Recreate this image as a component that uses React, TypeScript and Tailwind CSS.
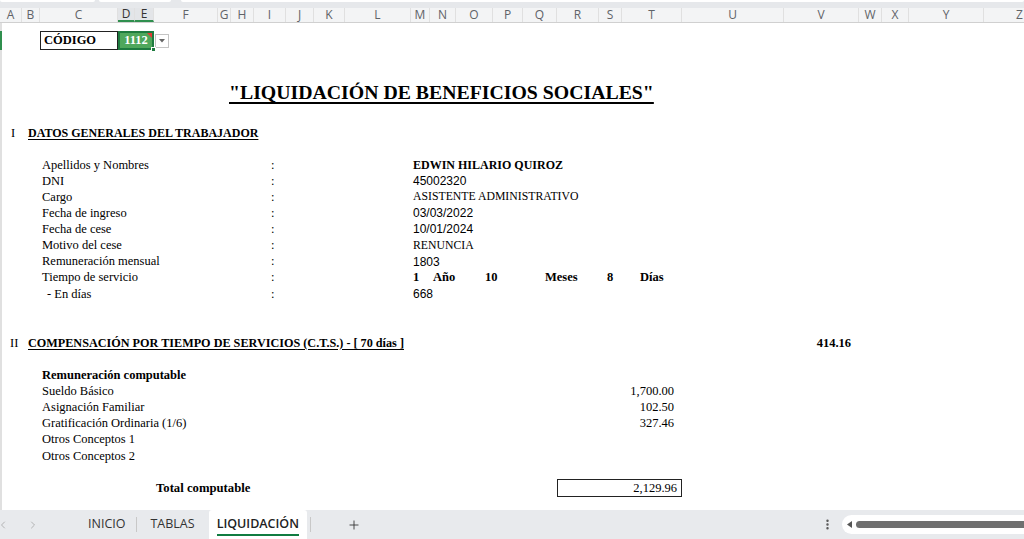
import React from "react";
import { ChevronLeft, ChevronRight, Plus, EllipsisVertical } from "lucide-react";

const cols: [string, string][] = [
  ["A", "w-[22px]"], ["B", "w-[18px]"], ["C", "w-[78px]"], ["D", "w-[17px]"], ["E", "w-[19px]"],
  ["F", "w-[64px]"], ["G", "w-[13px]"], ["H", "w-[23px]"], ["I", "w-[32px]"], ["J", "w-[28px]"],
  ["K", "w-[31px]"], ["L", "w-[66px]"], ["M", "w-[19px]"], ["N", "w-[26px]"], ["O", "w-[37px]"],
  ["P", "w-[30px]"], ["Q", "w-[34px]"], ["R", "w-[42px]"], ["S", "w-[23px]"], ["T", "w-[60px]"],
  ["U", "w-[102px]"], ["V", "w-[75px]"], ["W", "w-[23px]"], ["X", "w-[27px]"], ["Y", "w-[75px]"],
  ["Z", "w-[72px]"],
];

const serif = "font-['Liberation_Serif',serif]";
const sans = "font-['Liberation_Sans',sans-serif]";

function InfoRow({ label, value, indent }: { label: string; value: React.ReactNode; indent?: boolean }) {
  return (
    <div className="flex h-[16.1px] shrink-0 items-center">
      <div className="w-[40px] shrink-0" />
      <div className={`w-[229px] shrink-0 ${indent ? "pl-[5px]" : ""}`}>{label}</div>
      <div className="w-[142px] shrink-0">:</div>
      <div className="flex items-center whitespace-nowrap">{value}</div>
    </div>
  );
}

function CtsRow({ label, value, bold }: { label: string; value?: string; bold?: boolean }) {
  return (
    <div className="flex h-[16.2px] shrink-0 items-center">
      <div className="w-[40px] shrink-0" />
      <div className={`w-[532px] shrink-0 ${bold ? "font-bold" : ""}`}>{label}</div>
      <div className="w-[100px] shrink-0 text-right">{value ?? ""}</div>
    </div>
  );
}

export default function App() {
  return (
    <div className="flex h-[539px] w-[1024px] flex-col overflow-hidden bg-white">
      {/* top band */}
      <div className="flex h-[8px] shrink-0 items-start gap-[4px] bg-[#e6e8eb]">
        <div className="h-[2px] w-[95px] rounded-b-[3px] bg-white" />
        <div className="h-[2px] w-[72px] rounded-b-[3px] bg-white" />
        <div className="ml-[6px] h-[2px] flex-1 rounded-b-[3px] bg-white" />
      </div>
      {/* column headers */}
      <div className="flex h-[15px] shrink-0 border-b border-[#d0d0d0] bg-[#f3f4f5] font-['Open_Sans',sans-serif] text-[12px] leading-none text-[#5f6368]">
        {cols.map(([l, w]) => {
          const sel = l === "D" || l === "E";
          return (
            <div
              key={l}
              className={`${w} flex shrink-0 items-center justify-center border-r border-[#e0e0e0] ${sel ? "border-b-2 border-b-[#2f8f4e] bg-[#e3e5e8] text-[#333]" : ""}`}
            >
              {l}
            </div>
          );
        })}
      </div>
      {/* sheet */}
      <div className={`relative flex flex-1 flex-col border-l-[2px] border-[#e0e0e0] text-[12.5px] leading-none text-black ${serif}`}>
        <div className="absolute left-[-2px] top-[8px] h-[19px] w-[2px] bg-[#2f8f4e]" />
        <div className="h-[8px] shrink-0" />
        {/* código */}
        <div className="flex h-[19px] shrink-0 items-stretch">
          <div className="w-[38px] shrink-0" />
          <div className="flex w-[78px] shrink-0 items-center border border-[#222] pl-[3px] font-bold">CÓDIGO</div>
          <div className="relative flex w-[36px] shrink-0 items-center justify-center border-2 border-[#1e7b3f] bg-[#4fa75c] font-bold text-white">
            1112
            <div className="absolute right-0 top-0 h-0 w-0 border-l-[5px] border-t-[5px] border-l-transparent border-t-[#e53935]" />
            <div className="absolute bottom-[-4px] right-[-4px] h-[5px] w-[5px] border border-white bg-[#1e7b3f]" />
          </div>
          <div className="ml-[1px] mt-[3px] flex h-[14px] w-[14px] shrink-0 items-center justify-center border border-[#c4c4c4] bg-white">
            <svg width="6" height="4" viewBox="0 0 6 4"><path d="M0 0 L6 0 L3 3.5 Z" fill="#666" /></svg>
          </div>
        </div>
        <div className="h-[31px] shrink-0" />
        {/* title */}
        <div className="flex h-[24px] shrink-0 items-center pl-[227px]">
          <span className="text-[19.8px] font-bold underline decoration-[1.5px] underline-offset-[3px]">"LIQUIDACIÓN DE BENEFICIOS SOCIALES"</span>
        </div>
        <div className="h-[20px] shrink-0" />
        {/* section I */}
        <div className="flex h-[16px] shrink-0 items-center">
          <div className="w-[26px] shrink-0 pl-[9px]">I</div>
          <span className="text-[12px] font-bold underline underline-offset-[2px]">DATOS GENERALES DEL TRABAJADOR</span>
        </div>
        <div className="h-[16px] shrink-0" />
        <InfoRow label="Apellidos y Nombres" value={<span className="text-[12px] font-bold">EDWIN HILARIO QUIROZ</span>} />
        <InfoRow label="DNI" value={<span className={`text-[12px] ${sans}`}>45002320</span>} />
        <InfoRow label="Cargo" value={<span className="text-[11.75px]">ASISTENTE ADMINISTRATIVO</span>} />
        <InfoRow label="Fecha de ingreso" value={<span className={`text-[12px] ${sans}`}>03/03/2022</span>} />
        <InfoRow label="Fecha de cese" value={<span className={`text-[12px] ${sans}`}>10/01/2024</span>} />
        <InfoRow label="Motivo del cese" value={<span className="text-[11.75px]">RENUNCIA</span>} />
        <InfoRow label="Remuneración mensual" value={<span className={`text-[12px] ${sans}`}>1803</span>} />
        <InfoRow
          label="Tiempo de servicio"
          value={
            <div className="flex font-bold">
              <span className="w-[20px]">1</span>
              <span className="w-[52px]">Año</span>
              <span className="w-[60px]">10</span>
              <span className="w-[62px]">Meses</span>
              <span className="w-[33px]">8</span>
              <span>Días</span>
            </div>
          }
        />
        <InfoRow label="- En días" indent value={<span className={`text-[12px] ${sans}`}>668</span>} />
        <div className="h-[33px] shrink-0" />
        {/* section II */}
        <div className="flex h-[16px] w-[849px] shrink-0 items-center">
          <div className="w-[26px] shrink-0 pl-[8px]">II</div>
          <span className="text-[12.2px] font-bold underline underline-offset-[2px]">COMPENSACIÓN POR TIEMPO DE SERVICIOS (C.T.S.) - [ 70 días ]</span>
          <span className="ml-auto font-bold">414.16</span>
        </div>
        <div className="h-[16px] shrink-0" />
        <CtsRow label="Remuneración computable" bold />
        <CtsRow label="Sueldo Básico" value="1,700.00" />
        <CtsRow label="Asignación Familiar" value="102.50" />
        <CtsRow label="Gratificación Ordinaria (1/6)" value="327.46" />
        <CtsRow label="Otros Conceptos 1" />
        <CtsRow label="Otros Conceptos 2" />
        <div className="h-[15px] shrink-0" />
        <div className="flex h-[18px] shrink-0 items-center">
          <div className="w-[154px] shrink-0" />
          <div className="w-[401px] shrink-0 text-[12.7px] font-bold">Total computable</div>
          <div className="flex h-[18px] w-[125px] shrink-0 items-center justify-end border border-[#222] pr-[4px]">2,129.96</div>
        </div>
      </div>
      {/* tab bar */}
      <div className="flex h-[29px] shrink-0 items-stretch bg-[#e8eaed] font-['Open_Sans',sans-serif] text-[12.5px] text-[#333]">
        <div className="flex w-[80px] items-center">
          <ChevronLeft size={12} strokeWidth={1.5} className="-ml-[3px] text-[#a0a0a0]" />
          <ChevronRight size={12} strokeWidth={1.5} className="ml-[18px] text-[#a0a0a0]" />
        </div>
        <div className="flex items-center pl-[8px] pr-[11px]">INICIO</div>
        <div className="my-[7px] w-px bg-[#c8c8c8]" />
        <div className="flex items-center pl-[13px] pr-[14px]">TABLAS</div>
        <div className="flex flex-col items-center justify-center rounded-t-[3px] bg-white px-[8px]">
          <span className="mt-[2px] font-semibold text-[#222]">LIQUIDACIÓN</span>
          <div className="mt-[1px] h-[2px] w-full bg-[#107c41]" />
        </div>
        <div className="my-[7px] ml-[3px] w-px bg-[#c8c8c8]" />
        <div className="flex w-[86px] items-center justify-center">
          <Plus size={14} strokeWidth={1.5} className="text-[#333]" />
        </div>
        <div className="flex-1" />
        <div className="flex w-[30px] items-center justify-center">
          <EllipsisVertical size={13} strokeWidth={2.5} className="text-[#555]" />
        </div>
        <div className="my-[5px] flex max-w-[182px] flex-1 items-center rounded-l-full bg-white pl-[5px]">
          <svg width="5" height="7" viewBox="0 0 5 7"><path d="M5 0 L0 3.5 L5 7 Z" fill="#555" /></svg>
          <div className="ml-[4px] h-[7px] flex-1 rounded-l-full bg-[#6f6f6f]" />
        </div>
      </div>
    </div>
  );
}
